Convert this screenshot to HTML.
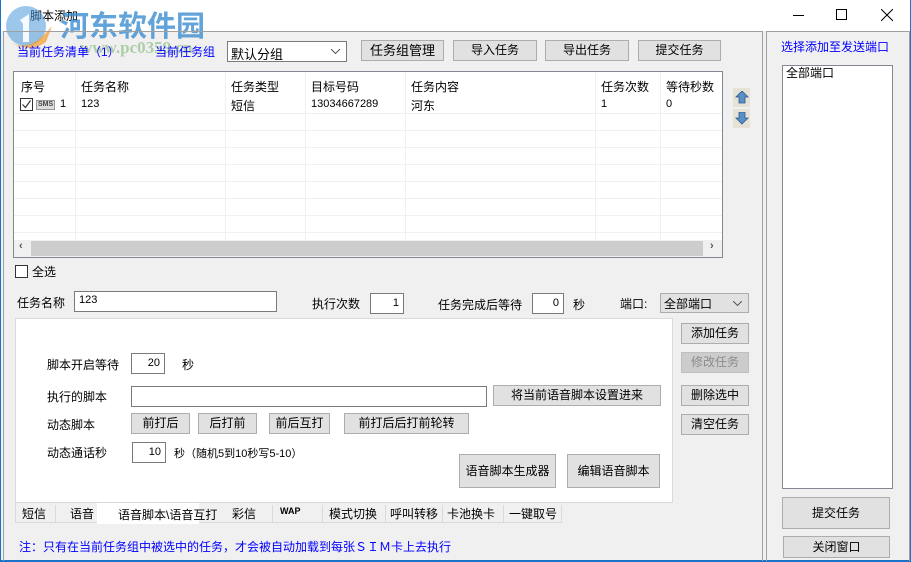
<!DOCTYPE html>
<html><head><meta charset="utf-8"><style>
*{box-sizing:border-box;margin:0;padding:0}
body{width:911px;height:562px;background:#f0f0f0;position:relative;overflow:hidden;font-family:"Liberation Sans","Noto Sans CJK SC","WenQuanYi Zen Hei",sans-serif;font-size:12px;color:#000}
.a{position:absolute;white-space:nowrap}
.btn{position:absolute;background:#e1e1e1;border:1px solid #adadad;text-align:center;font-size:12px}
.inp{position:absolute;background:#fff;border:1px solid #7a7a7a;font-size:11px;padding:0 4px;text-align:right}
.blue{color:#0000ff}
.col{position:absolute;top:0;bottom:16px;width:1px;background:#f0f0f0}
.hl{position:absolute;left:0;right:0;height:1px;background:#f0f0f0}
</style></head><body>
<div class="a" style="left:0;top:0;width:911px;height:31px;background:#fff"></div>
<div class="a" style="left:0;top:0;width:1px;height:562px;background:#1a73c8"></div>
<div class="a" style="left:0;top:560px;width:911px;height:2px;background:#1a73c8"></div>
<div class="a" style="left:910px;top:0;width:1px;height:562px;background:#1a73c8"></div>
<div class="a" style="left:30px;top:7px;font-size:12px">脚本添加</div>
<div class="a" style="left:793px;top:15px;width:11px;height:1px;background:#000"></div>
<div class="a" style="left:836px;top:9px;width:11px;height:11px;border:1px solid #000"></div>
<svg class="a" style="left:881px;top:9px" width="12" height="12"><path d="M0 0L12 12M12 0L0 12" stroke="#000" stroke-width="1"/></svg>
<svg class="a" style="left:2px;top:4px" width="58" height="50"><circle cx="24" cy="22" r="20" fill="#4a98d8" opacity=".55"/><path d="M8 38Q28 50 50 22L44 38Q28 50 8 38Z" fill="#f39a2a" opacity=".7"/><path d="M18 16L27 10V38H21V20Z" fill="#fff" opacity=".9"/></svg>
<div class="a" style="left:60px;top:3px;font-size:29px;font-weight:bold;color:#3b8ed0;opacity:.8;font-family:'Noto Sans CJK SC',sans-serif">河东软件园</div>
<div class="a" style="left:80px;top:38px;font-size:17px;font-weight:bold;color:#4a9a3a;opacity:.4;font-family:'Liberation Serif',serif">www.pc0359.cn</div>
<div class="a" style="left:3px;top:31px;width:760px;height:530px;border:1px solid #a0a0a0;border-bottom:none"></div>
<div class="a" style="left:766px;top:31px;width:144px;height:530px;border:1px solid #a0a0a0;border-bottom:none"></div>
<div class="a blue" style="left:17px;top:43px">当前任务清单（1）</div>
<div class="a blue" style="left:155px;top:43px">当前任务组</div>
<div class="a" style="left:227px;top:41px;width:120px;height:21px;background:#fff;border:1px solid #7a7a7a;padding:2px 3px;font-size:13px">默认分组<svg style="position:absolute;right:6px;top:7px" width="9" height="5"><path d="M0 0L4.5 4.5L9 0" stroke="#555" fill="none"/></svg></div>
<div class="btn" style="left:361px;top:40px;width:83px;height:21px;line-height:19px;font-size:13px">任务组管理</div>
<div class="btn" style="left:453px;top:40px;width:84px;height:21px;line-height:19px">导入任务</div>
<div class="btn" style="left:545px;top:40px;width:84px;height:21px;line-height:19px">导出任务</div>
<div class="btn" style="left:638px;top:40px;width:83px;height:21px;line-height:19px">提交任务</div>
<div class="a" style="left:13px;top:71px;width:710px;height:187px;background:#fff;border:1px solid #828790;overflow:hidden">
 <div class="col" style="left:61px"></div><div class="col" style="left:211px"></div><div class="col" style="left:291px"></div><div class="col" style="left:391px"></div><div class="col" style="left:581px"></div><div class="col" style="left:646px"></div>
 <div class="hl" style="top:41px"></div><div class="hl" style="top:58px"></div><div class="hl" style="top:75px"></div><div class="hl" style="top:92px"></div><div class="hl" style="top:109px"></div><div class="hl" style="top:126px"></div><div class="hl" style="top:143px"></div><div class="hl" style="top:160px"></div>
 <div class="a" style="left:7px;top:6px;font-size:12px">序号</div>
 <div class="a" style="left:67px;top:6px">任务名称</div>
 <div class="a" style="left:217px;top:6px">任务类型</div>
 <div class="a" style="left:297px;top:6px">目标号码</div>
 <div class="a" style="left:397px;top:6px">任务内容</div>
 <div class="a" style="left:587px;top:6px">任务次数</div>
 <div class="a" style="left:652px;top:6px">等待秒数</div>
 <div class="a" style="left:6px;top:26px;width:13px;height:13px;border:1px solid #333"><svg width="11" height="11" style="position:absolute;left:0;top:0"><path d="M1.5 5.5L4.5 8.5L9.5 1.5" stroke="#333" fill="none" stroke-width="1.2"/></svg></div>
 <div class="a" style="left:22px;top:28px;font-size:7px;font-weight:bold;color:#444;border:1px solid #999;background:#ddd;line-height:8px;padding:0 1px">SMS</div>
 <div class="a" style="left:46px;top:26px;font-size:11px">1</div>
 <div class="a" style="left:67px;top:26px;font-size:11px">123</div>
 <div class="a" style="left:217px;top:25px">短信</div>
 <div class="a" style="left:297px;top:26px;font-size:11px">13034667289</div>
 <div class="a" style="left:397px;top:25px">河东</div>
 <div class="a" style="left:587px;top:26px;font-size:11px">1</div>
 <div class="a" style="left:652px;top:26px;font-size:11px">0</div>
 <div class="a" style="left:0;bottom:0;width:708px;height:17px;background:#f0f0f0"><div class="a" style="left:17px;top:1px;width:672px;height:15px;background:#cdcdcd"></div><div class="a" style="left:5px;top:0;font-size:11px;color:#555;font-weight:bold">‹</div><div class="a" style="left:696px;top:0;font-size:11px;color:#555;font-weight:bold">›</div></div>
</div>
<div class="a" style="left:733px;top:88px;width:17px;height:19px;background:#e6e2d6"></div>
<div class="a" style="left:733px;top:109px;width:17px;height:19px;background:#e6e2d6"></div>
<svg class="a" style="left:735px;top:91px" width="14" height="13"><path d="M7 0L13 6H10V12H4V6H1Z" fill="#5a8fc8" stroke="#2a5a90" stroke-width=".8"/></svg>
<svg class="a" style="left:735px;top:112px" width="14" height="13"><path d="M7 12L13 6H10V0H4V6H1Z" fill="#5a8fc8" stroke="#2a5a90" stroke-width=".8"/></svg>
<div class="a" style="left:15px;top:265px;width:13px;height:13px;border:1px solid #333;background:#fff"></div>
<div class="a" style="left:32px;top:263px">全选</div>
<div class="a" style="left:17px;top:294px">任务名称</div>
<div class="inp" style="left:74px;top:291px;width:203px;height:21px;text-align:left;line-height:17px">123</div>
<div class="a" style="left:312px;top:295px">执行次数</div>
<div class="inp" style="left:370px;top:293px;width:34px;height:21px;line-height:19px">1</div>
<div class="a" style="left:438px;top:296px">任务完成后等待</div>
<div class="inp" style="left:532px;top:293px;width:32px;height:21px;line-height:19px">0</div>
<div class="a" style="left:573px;top:296px">秒</div>
<div class="a" style="left:620px;top:295px">端口:</div>
<div class="a" style="left:660px;top:293px;width:89px;height:20px;background:#e1e1e1;border:1px solid #adadad;padding:1px 3px">全部端口<svg style="position:absolute;right:6px;top:7px" width="9" height="5"><path d="M0 0L4.5 4.5L9 0" stroke="#555" fill="none"/></svg></div>
<div class="a" style="left:15px;top:318px;width:658px;height:185px;background:#fff;border:1px solid #dadada"></div>
<div class="a" style="left:47px;top:356px">脚本开启等待</div>
<div class="inp" style="left:131px;top:353px;width:34px;height:21px;line-height:19px">20</div>
<div class="a" style="left:182px;top:356px">秒</div>
<div class="a" style="left:47px;top:388px">执行的脚本</div>
<div class="inp" style="left:131px;top:386px;width:356px;height:21px"></div>
<div class="btn" style="left:493px;top:385px;width:168px;height:21px;line-height:19px">将当前语音脚本设置进来</div>
<div class="a" style="left:47px;top:416px">动态脚本</div>
<div class="btn" style="left:131px;top:413px;width:59px;height:21px;line-height:19px">前打后</div>
<div class="btn" style="left:198px;top:413px;width:59px;height:21px;line-height:19px">后打前</div>
<div class="btn" style="left:269px;top:413px;width:61px;height:21px;line-height:19px">前后互打</div>
<div class="btn" style="left:344px;top:413px;width:125px;height:21px;line-height:19px">前打后后打前轮转</div>
<div class="a" style="left:47px;top:444px">动态通话秒</div>
<div class="inp" style="left:132px;top:442px;width:34px;height:21px;line-height:19px">10</div>
<div class="a" style="left:174px;top:445px;font-size:11px">秒（随机5到10秒写5-10）</div>
<div class="btn" style="left:459px;top:454px;width:97px;height:34px;line-height:32px">语音脚本生成器</div>
<div class="btn" style="left:567px;top:454px;width:93px;height:34px;line-height:32px">编辑语音脚本</div>
<div class="btn" style="left:681px;top:323px;width:68px;height:21px;line-height:19px">添加任务</div>
<div class="btn" style="left:681px;top:352px;width:68px;height:21px;line-height:19px;background:#cccccc;border-color:#bfbfbf;color:#8c8c8c">修改任务</div>
<div class="btn" style="left:681px;top:385px;width:68px;height:21px;line-height:19px">删除选中</div>
<div class="btn" style="left:681px;top:414px;width:68px;height:21px;line-height:19px">清空任务</div>
<div class="a" style="left:15px;top:503px;width:547px;height:20px;border-left:1px solid #dadada;border-bottom:1px solid #dadada"></div>
<div class="a" style="left:22px;top:505px">短信</div>
<div class="a" style="left:55px;top:505px;width:1px;height:17px;background:#dadada"></div>
<div class="a" style="left:70px;top:505px">语音</div>
<div class="a" style="left:97px;top:503px;width:102px;height:21px;background:#fff"></div>
<div class="a" style="left:118px;top:506px">语音脚本\语音互打</div>
<div class="a" style="left:232px;top:505px">彩信</div>
<div class="a" style="left:272px;top:505px;width:1px;height:17px;background:#dadada"></div>
<div class="a" style="left:280px;top:506px;font-size:9px;font-weight:bold">WAP</div>
<div class="a" style="left:322px;top:505px;width:1px;height:17px;background:#dadada"></div>
<div class="a" style="left:329px;top:505px">模式切换</div>
<div class="a" style="left:385px;top:505px;width:1px;height:17px;background:#dadada"></div>
<div class="a" style="left:390px;top:505px">呼叫转移</div>
<div class="a" style="left:442px;top:505px;width:1px;height:17px;background:#dadada"></div>
<div class="a" style="left:447px;top:505px">卡池换卡</div>
<div class="a" style="left:503px;top:505px;width:1px;height:17px;background:#dadada"></div>
<div class="a" style="left:509px;top:505px">一键取号</div>
<div class="a" style="left:561px;top:505px;width:1px;height:17px;background:#dadada"></div>
<div class="a blue" style="left:19px;top:538px">注：只有在当前任务组中被选中的任务，才会被自动加载到每张ＳＩＭ卡上去执行</div>
<div class="a blue" style="left:781px;top:38px">选择添加至发送端口</div>
<div class="a" style="left:782px;top:65px;width:111px;height:424px;background:#fff;border:1px solid #828790;padding:0 3px;line-height:14px">全部端口</div>
<div class="btn" style="left:782px;top:497px;width:108px;height:32px;line-height:30px">提交任务</div>
<div class="btn" style="left:783px;top:536px;width:107px;height:22px;line-height:20px">关闭窗口</div>
</body></html>
